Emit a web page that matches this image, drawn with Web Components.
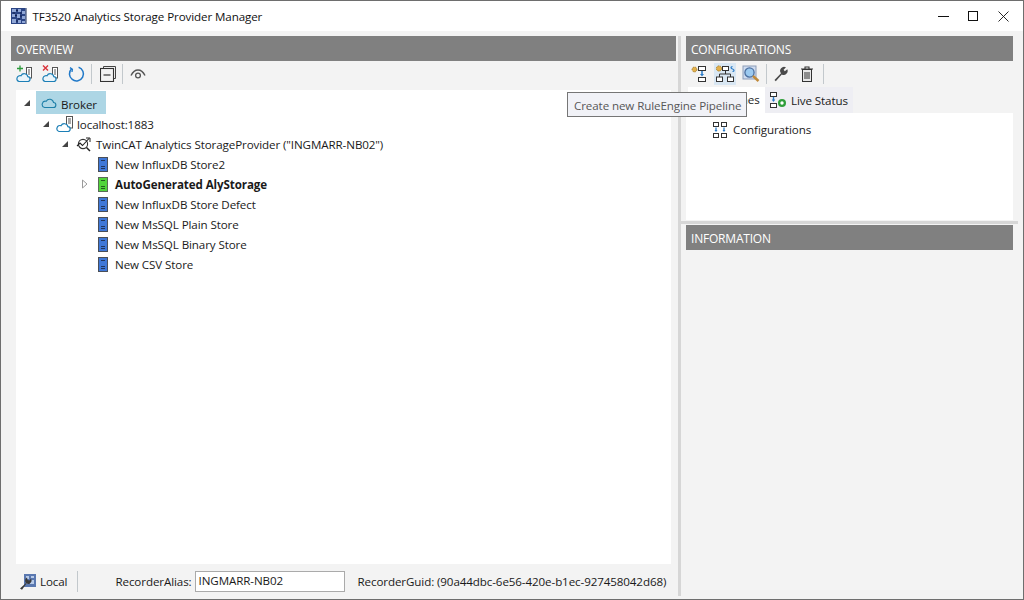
<!DOCTYPE html>
<html lang="en"><head><meta charset="utf-8"><title>TF3520 Analytics Storage Provider Manager</title>
<style>
html,body{margin:0;height:100%;overflow:hidden;background:#f3f3f3}
body{font:11.6px/16px "Open Sans","Noto Sans",sans-serif;letter-spacing:-.1px;color:#1a1a1a}
</style></head><body>
<app-window>
  <title-bar slot="title">TF3520 Analytics Storage Provider Manager</title-bar>
  <section slot="left" style="display:contents">
    <pane-header>OVERVIEW</pane-header>
    <tool-bar class="left">
      <tool-btn icon="cloudadd"></tool-btn><tool-btn icon="cloudx"></tool-btn><tool-btn icon="refresh"></tool-btn><tool-sep style="margin:0 3px 0 2px"></tool-sep><tool-btn icon="collapse"></tool-btn><tool-sep style="margin:0 2px 0 1px"></tool-sep><tool-btn icon="eye"></tool-btn>
    </tool-bar>
    <tree-view>
      <tree-row style="--l:7px;--t:13px;--i:20px" toggle="open" icon="cloud" selected>Broker</tree-row>
      <tree-row style="--l:26px;--t:14px;--i:21px" toggle="open" icon="cloudserver">localhost:1883</tree-row>
      <tree-row style="--l:45px;--t:15px;--i:20px" toggle="open" icon="analytics">TwinCAT Analytics StorageProvider ("INGMARR-NB02")</tree-row>
      <tree-row style="--l:65px;--t:17px;--i:17px" icon="store">New InfluxDB Store2</tree-row>
      <tree-row style="--l:65px;--t:17px;--i:17px" toggle="closed" icon="storegreen" bold>AutoGenerated AlyStorage</tree-row>
      <tree-row style="--l:65px;--t:17px;--i:17px" icon="store">New InfluxDB Store Defect</tree-row>
      <tree-row style="--l:65px;--t:17px;--i:17px" icon="store">New MsSQL Plain Store</tree-row>
      <tree-row style="--l:65px;--t:17px;--i:17px" icon="store">New MsSQL Binary Store</tree-row>
      <tree-row style="--l:65px;--t:17px;--i:17px" icon="store">New CSV Store</tree-row>
    </tree-view>
    <status-bar></status-bar>
  </section>
  <section slot="right" style="display:contents">
    <config-pane></config-pane>
  </section>
  <hover-tip slot="tip">Create new RuleEngine Pipeline</hover-tip>
</app-window>
<script>
const ICONS={
app:`<svg viewBox="0 0 16 16" width="16" height="16"><rect width="16" height="16" fill="#2b4585"/><rect x="14.500" width="1.500" height="16" fill="#8a93a8"/><path d="M1 1h4v3H1zM7 1h3v3H7zM11 3h3v3h-3zM1 6h3v3H1zM6 6h3v4H6zM11 8h3v3h-3zM1 11h4v4H1zM7 12h3v3H7zM11 13h3v2h-3z" fill="#8fa6d6"/><path d="M5 2.500h2M4 7.500h2M9 8h2M10 4v2M5 13h2M3 4v2M8 10v2" stroke="#101f4c" fill="none"/></svg>`,
cloudadd:`<svg viewBox="0 0 18 18" width="18" height="18"><path d="M5 .5v6M2 3.500h6" stroke="#2a9a3a" stroke-width="1.300"/><rect x="11.500" y="2.500" width="5" height="10.500" fill="#fff" stroke="#555"/><path d="M13 5h2M13 7h2M13 9h2" stroke="#555"/><path d="M4 16.500h8.500a2.400 2.400 0 0 0 .3-4.800 3.600 3.600 0 0 0-6.800-.9 2.900 2.900 0 0 0-2 5.700z" fill="#eaf4fa" stroke="#1c7fb6" stroke-width="1.200"/></svg>`,
cloudx:`<svg viewBox="0 0 18 18" width="18" height="18"><path d="M2 .5l5 5M7 .5l-5 5" stroke="#d8323a" stroke-width="1.400"/><rect x="11.500" y="2.500" width="5" height="10.500" fill="#fff" stroke="#555"/><path d="M13 5h2M13 7h2M13 9h2" stroke="#555"/><path d="M4 16.500h8.500a2.400 2.400 0 0 0 .3-4.800 3.600 3.600 0 0 0-6.800-.9 2.900 2.900 0 0 0-2 5.700z" fill="#eaf4fa" stroke="#1c7fb6" stroke-width="1.200"/></svg>`,
refresh:`<svg viewBox="0 0 18 18" width="18" height="18"><path d="M4.600 3.800a7 7 0 1 0 7-1.600" fill="none" stroke="#1f78c8" stroke-width="1.500"/><path d="M3 2.600l2.400 1.600L5 7" fill="none" stroke="#1f78c8" stroke-width="1.300"/></svg>`,
collapse:`<svg viewBox="0 0 16 16" width="16" height="16"><path d="M3.500 2V.5h12v12H14" fill="none" stroke="#444"/><rect x=".5" y="2.500" width="13" height="13" fill="#f3f3f3" stroke="#333" stroke-width="1.100"/><path d="M3.500 9h7" stroke="#333" stroke-width="1.200"/></svg>`,
eye:`<svg viewBox="0 0 16 12" width="16" height="12"><path d="M1 7.500C3 3.500 5.500 2 8 2s5 1.500 7 5.500" fill="none" stroke="#555" stroke-width="1.400"/><circle cx="8" cy="7.500" r="2.400" fill="none" stroke="#555" stroke-width="1.300"/></svg>`,
cloud:`<svg viewBox="0 0 16 12" width="16" height="12"><path d="M3.600 10.500h8.600a2.500 2.500 0 0 0 .3-5 3.900 3.900 0 0 0-7.300-1.200 3.100 3.100 0 0 0-1.600 6.200z" fill="none" stroke="#1d7fa8" stroke-width="1.100"/></svg>`,
cloudserver:`<svg viewBox="0 0 17 17" width="17" height="17"><rect x="10.500" y=".5" width="6" height="11.500" fill="#fff" stroke="#555"/><path d="M12 3h3M12 5h3M12 7h3" stroke="#555"/><path d="M3 15.500h8.600a2.400 2.400 0 0 0 .3-4.800 3.700 3.700 0 0 0-6.900-1 2.900 2.900 0 0 0-2 5.800z" fill="#fff" stroke="#1c7fb6" stroke-width="1.200"/></svg>`,
analytics:`<svg viewBox="0 0 16 16" width="16" height="16"><circle cx="7" cy="8" r="4.600" fill="none" stroke="#333" stroke-width="1.100"/><path d="M10.500 11.500l3.500 3.500" stroke="#222" stroke-width="1.500"/><path d="M1 10l3-3 2.500 2.500L13 2.500" fill="none" stroke="#222" stroke-width="1.100"/><path d="M10 2h4v4" fill="none" stroke="#222"/></svg>`,
store:`<svg viewBox="0 0 10 15" width="10" height="15"><rect x=".5" y=".5" width="9" height="14" fill="#3f78d8" stroke="#4a4f58"/><path d="M3 3.500h4M3 9.500h4M3 11.500h4" stroke="#20365f"/></svg>`,
storegreen:`<svg viewBox="0 0 10 15" width="10" height="15"><rect x=".5" y=".5" width="9" height="14" fill="#52d43c" stroke="#5a6a58"/><path d="M3 3.500h4M3 9.500h4M3 11.500h4" stroke="#255c20"/></svg>`,
gearflow:`<svg viewBox="0 0 16 16" width="16" height="16"><circle cx="3.500" cy="3.500" r="2.400" fill="#e3b04a" stroke="#a87f2a" stroke-dasharray="1.400 .7"/><rect x="7.500" y=".5" width="7" height="4" fill="#fff" stroke="#333"/><path d="M11 5v4" stroke="#2a7bc8" stroke-width="1.500"/><path d="M9 8l2 2.500L13 8z" fill="#2a7bc8"/><rect x="7.500" y="11.500" width="7" height="4" fill="#fff" stroke="#333"/></svg>`,
pipeline:`<svg viewBox="0 0 20 18" width="20" height="18"><circle cx="4" cy="3.500" r="2.600" fill="#e3b04a" stroke="#a87f2a" stroke-dasharray="1.400 .7"/><rect x="7.500" y="1.500" width="6" height="4" fill="#fff" stroke="#333"/><path d="M10.500 5.500V9M4.500 12V9h11v3" fill="none" stroke="#333"/><rect x="1.500" y="12" width="6" height="4.500" fill="#fff" stroke="#333"/><rect x="12.500" y="12" width="6" height="4.500" fill="#fff" stroke="#333"/><path d="M17.500 1.500c-2 0-2 2 0 2.500s2 2.500 0 2.500" fill="none" stroke="#2a7bc8" stroke-width="1.200"/></svg>`,
search:`<svg viewBox="0 0 18 18" width="18" height="18"><rect x="1" y="1" width="13" height="13" fill="#cfdcf0" stroke="#8d9db8"/><circle cx="7.500" cy="7.500" r="4.600" fill="#9ccaf0" stroke="#4b6f9f" stroke-width="1.300"/><path d="M11 11l5.500 5" stroke="#c08a3a" stroke-width="2.400"/></svg>`,
wrench:`<svg viewBox="0 0 16 16" width="16" height="16"><path d="M1.500 14.500L8 7.800a4 4 0 0 1 5-6l-2.400 2.400 1.200 1.600 2.500-2a4 4 0 0 1-5.500 5.200L2.800 15.800z" fill="#4a4a4a" transform="translate(0 -.5)"/></svg>`,
trash:`<svg viewBox="0 0 14 16" width="14" height="16"><path d="M1 3h12M5 3V1h4v2" fill="none" stroke="#333" stroke-width="1.100"/><rect x="2.500" y="3.500" width="9" height="12" fill="#e8e8e8" stroke="#333"/><path d="M5 6v7M7 6v7M9 6v7" stroke="#333"/></svg>`,
live:`<svg viewBox="0 0 18 16" width="18" height="16"><rect x=".5" y=".5" width="6" height="4" fill="#fff" stroke="#333"/><path d="M3.500 5v4" stroke="#2a7bc8" stroke-width="1.400"/><path d="M1.800 7.500l1.700 2.500 1.700-2.500z" fill="#2a7bc8"/><rect x=".5" y="11.500" width="6" height="4" fill="#fff" stroke="#333"/><circle cx="12" cy="11" r="4" fill="#2f9e3a"/><circle cx="12" cy="11" r="1.700" fill="#fff"/></svg>`,
configs:`<svg viewBox="0 0 14 16" width="14" height="16"><rect x=".5" y=".5" width="5" height="4" fill="#fff" stroke="#333"/><rect x="8.500" y=".5" width="5" height="4" fill="#fff" stroke="#333"/><path d="M3 5.500v3.500M11 5.500v3.500" stroke="#2a7bc8" stroke-width="1.300"/><path d="M1.500 8l1.500 2 1.500-2zM9.500 8l1.500 2 1.500-2z" fill="#2a7bc8"/><rect x=".5" y="11.500" width="5" height="4" fill="#fff" stroke="#333"/><rect x="8.500" y="11.500" width="5" height="4" fill="#fff" stroke="#333"/></svg>`,
local:`<svg viewBox="0 0 18 18" width="18" height="18"><rect x="5" y="1" width="12" height="13" fill="#5a78b0"/><path d="M7 3h3v3H7zM12 3h3v2h-3zM7 8h2v3H7zM11 7h4v4h-4z" fill="#b7cae8"/><path d="M1 15.500L7 10a3.500 3.500 0 0 1 1-5.500l.5 2.500 2 .5 1.500-2a3.500 3.500 0 0 1-4.500 5L3 16.800z" fill="#3a3a3a"/></svg>`
};
function def(name,html,setup){customElements.define(name,class extends HTMLElement{
  constructor(){super();this.attachShadow({mode:'open'}).innerHTML=html}
  connectedCallback(){setup&&setup.call(this,this.shadowRoot)}
})}
def('x-icon',`<style>:host{display:inline-flex;align-items:center;justify-content:center;flex:none}</style><span id="i" style="display:contents"></span>`,function(r){r.getElementById('i').innerHTML=ICONS[this.getAttribute('name')]||''});
def('app-window',`<style>
:host{display:grid;box-sizing:border-box;width:1024px;height:600px;border:1px solid #6e6e6e;grid-template-rows:30px 1fr;position:relative;background:#f3f3f3}
#main{display:grid;grid-template-columns:665px 10px 327px;padding:5px 0 0 10px;min-height:0}
#l,#r{display:flex;flex-direction:column;min-height:0}
#split{position:relative}
#split::after{content:"";position:absolute;left:2px;width:3px;top:0;bottom:3px;background:#d6d6d6}
</style><slot name="title"></slot><div id="main"><div id="l"><slot name="left"></slot></div><div id="split"></div><div id="r"><slot name="right"></slot></div></div><slot name="tip"></slot>`);
def('title-bar',`<style>
:host{display:flex;align-items:center;background:#fff;height:30px;padding:0 5px 0 10px;color:#111}
x-icon{margin-right:5.500px}
#t{flex:1;white-space:nowrap;padding-top:1px}
#b{display:flex;align-items:center}
.c{width:30px;height:30px;display:flex;align-items:center;justify-content:center}
</style><x-icon name="app"></x-icon><span id="t"><slot></slot></span><div id="b">
<div class="c"><svg width="11" height="11" viewBox="0 0 11 11"><path d="M0 5.500h11" stroke="#111"/></svg></div>
<div class="c"><svg width="10" height="10" viewBox="0 0 10 10"><rect x=".5" y=".5" width="9" height="9" fill="none" stroke="#111"/></svg></div>
<div class="c"><svg width="11" height="11" viewBox="0 0 11 11"><path d="M.5.5l10 10M10.500.5l-10 10" stroke="#111" stroke-width=".9"/></svg></div>
</div>`);
def('pane-header',`<style>:host{display:flex;align-items:center;flex:none;height:25px;box-sizing:border-box;background:#808080;color:#fff;padding:2px 0 0 5px;font-size:12px;letter-spacing:-.2px}</style><slot></slot>`);
def('tool-bar',`<style>:host{display:flex;align-items:center;flex:none;height:26px}
:host(.left){box-sizing:content-box;padding-bottom:3px}</style><slot></slot>`);
def('tool-btn',`<style>:host{display:flex;align-items:center;justify-content:center;width:22px;height:22px;margin:0 2px;flex:none}
:host([hot]){background:#d9e7f3}</style><span id="i" style="display:contents"></span>`,function(r){r.getElementById('i').innerHTML=ICONS[this.getAttribute('icon')]});
def('tool-sep',`<style>:host{display:block;width:1px;height:20px;background:#c2c8cc;flex:none}</style>`);
def('tree-view',`<style>:host{display:block;flex:1;background:#fff;margin:0 5px;padding-top:1px;min-height:0;overflow:hidden}</style><slot></slot>`);
def('tree-row',`<style>
:host{display:flex;align-items:center;height:20px;padding-left:var(--l);white-space:nowrap}
:host([selected]){height:23px}
#tog{width:var(--t);flex:none;display:flex;align-items:center}
#sel{display:flex;align-items:center}
:host([selected]) #sel{background:#add6e5;height:23px;padding:0 9px 0 5px}
#ic{width:var(--i);flex:none;display:flex;justify-content:flex-start}
#tx{padding-top:1px}
:host([selected]) #tx{padding-top:5px}
:host([bold]) #tx{font-weight:700}
</style><span id="tog"></span><span id="sel"><span id="ic"></span><span id="tx"><slot></slot></span></span>`,function(r){
 const t=this.getAttribute('toggle');
 if(t==='open')r.getElementById('tog').innerHTML='<svg width="8" height="8" viewBox="0 0 8 8"><path d="M7 1v6H1z" fill="#444"/></svg>';
 if(t==='closed')r.getElementById('tog').innerHTML='<svg width="8" height="10" viewBox="0 0 8 10"><path d="M1.500 1v8l4.500-4z" fill="#fff" stroke="#9a9a9a"/></svg>';
 r.getElementById('ic').innerHTML=ICONS[this.getAttribute('icon')];
});
def('status-bar',`<style>
:host{display:flex;align-items:center;flex:none;height:35px;padding-left:8px;white-space:nowrap}
.sep{width:1px;height:21px;background:#c2c8cc;margin:0 37px 0 10px}
.box{width:150px;height:21px;box-sizing:border-box;border:1px solid #aaa;background:#fff;padding:0 3px;line-height:17px;margin:0 13px 0 3px}
x-icon{margin-right:3px}
</style><x-icon name="local"></x-icon><span>Local</span><div class="sep"></div><span>RecorderAlias:</span><div class="box">INGMARR-NB02</div><span>RecorderGuid: (90a44dbc-6e56-420e-b1ec-927458042d68)</span>`);
def('config-pane',`<style>
:host{display:flex;flex-direction:column;flex:1;min-height:0}
#top{height:184px;display:flex;flex-direction:column;flex:none}
#tabs{display:flex;align-items:stretch;height:26px;flex:none;padding-left:2px}
.tab{display:flex;align-items:center;white-space:nowrap}
.on{background:#fff;width:77px;box-sizing:border-box;padding-left:24px}
.off{background:#eeeef3;width:88px;box-sizing:border-box;padding-left:5px;gap:3px}
.off span{padding-top:2px}
#body{flex:1;background:#fff;padding:9px 0 0 27px;display:flex;align-items:flex-start;gap:6px;line-height:16px}
#hs{height:3px;background:#d6d6d6;margin:1px 0 1px -5px;width:337px;flex:none}
</style>
<div id="top"><pane-header>CONFIGURATIONS</pane-header>
<tool-bar><tool-btn icon="gearflow"></tool-btn><tool-btn icon="pipeline" hot></tool-btn><tool-btn icon="search"></tool-btn><tool-sep style="margin:0 1px 0 2px"></tool-sep><tool-btn icon="wrench"></tool-btn><tool-btn icon="trash"></tool-btn><tool-sep style="margin-left:3px"></tool-sep></tool-bar>
<div id="tabs"><div class="tab on">Pipelines</div><div class="tab off"><x-icon name="live"></x-icon><span>Live Status</span></div></div>
<div id="body"><x-icon name="configs"></x-icon><span>Configurations</span></div></div>
<div id="hs"></div>
<pane-header>INFORMATION</pane-header>`);
def('hover-tip',`<style>:host{position:absolute;left:566px;top:91px;width:180px;height:25px;box-sizing:border-box;background:#f1f2f7;border:1px solid #767676;color:#575757;display:flex;align-items:center;padding:2px 0 0 6px;white-space:nowrap}</style><slot></slot>`);
</script>
</body></html>
